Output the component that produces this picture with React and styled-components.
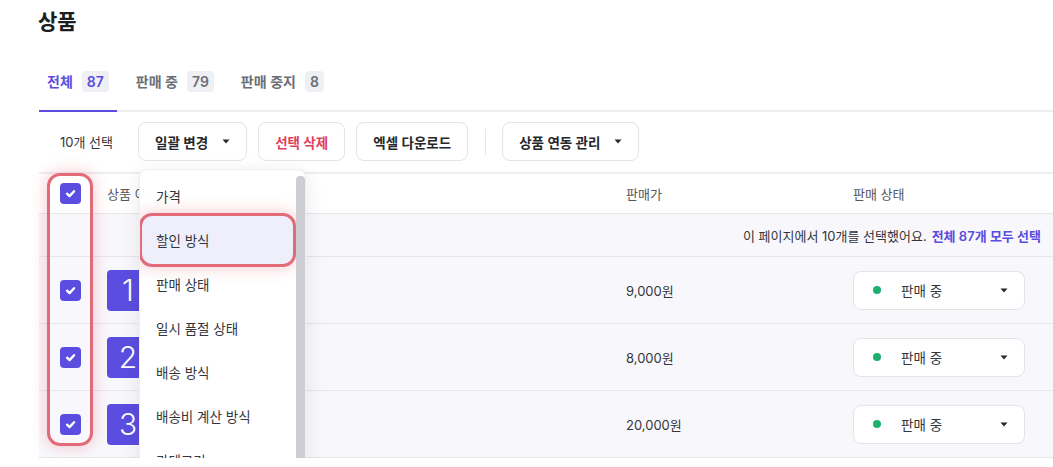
import React from 'react';
import styled, { createGlobalStyle } from 'styled-components';

const PURPLE = '#5b4de0';
const RING = '#e36a78';

const GlobalStyle = createGlobalStyle`
  html, body {
    margin: 0;
    background: #ffffff;
    overflow: hidden;
  }
  body {
    font-family: 'Inter', 'Noto Sans CJK KR', sans-serif;
    color: #222327;
  }
  * { box-sizing: border-box; }
`;

const Page = styled.div`
  padding: 8px 0 0 39px;
  height: 458px;
  overflow: hidden;
`;

const Title = styled.h1`
  margin: 0 0 16px -1px;
  font-size: 21px;
  line-height: 28px;
  font-weight: 700;
  color: #1c1d21;
`;

const Tabs = styled.div`
  display: flex;
  gap: 11px;
  height: 60px;
  border-bottom: 2px solid #eceef1;
`;

const Tab = styled.div`
  position: relative;
  display: flex;
  align-items: center;
  gap: 9px;
  padding: 0 8px;
  font-size: 14px;
  font-weight: 600;
  color: ${p => (p.$active ? PURPLE : '#6b6e76')};

  &::after {
    content: '';
    position: absolute;
    left: 0;
    right: 0;
    bottom: -2px;
    height: 2px;
    background: ${p => (p.$active ? PURPLE : 'transparent')};
  }
`;

const Badge = styled.span`
  padding: 2px 5px;
  border-radius: 4px;
  background: #eff0f4;
  font-size: 14px;
  font-weight: 600;
  color: ${p => (p.$active ? PURPLE : '#6b6e76')};
`;

const Toolbar = styled.div`
  display: flex;
  align-items: center;
  padding: 10px 0 0 21px;
`;

const SelectedCount = styled.span`
  font-size: 13px;
  color: #34363b;
  margin-right: 25px;
`;

const ButtonWrap = styled.div`
  position: relative;
  margin-right: ${p => p.$gap || 11}px;
`;

const Button = styled.div`
  display: flex;
  align-items: center;
  gap: 14px;
  height: 39px;
  padding: 0 16px;
  border: 1px solid #e3e4e8;
  border-radius: 8px;
  background: #fff;
  font-size: 13.5px;
  font-weight: 600;
  color: ${p => (p.$danger ? '#e0405a' : '#26272b')};
  white-space: nowrap;
`;

const Divider = styled.div`
  width: 1px;
  height: 26px;
  background: #e6e7eb;
  margin: 0 16px 0 5px;
`;

const Menu = styled.div`
  position: absolute;
  left: 1px;
  top: calc(100% + 8px);
  width: 167px;
  height: 330px;
  padding-top: 4px;
  background: #fff;
  border: 1px solid #eceef1;
  border-radius: 8px;
  box-shadow: 0 4px 18px rgba(30, 30, 50, 0.1);
  z-index: 10;
  overflow: hidden;
`;

const Scrollbar = styled.div`
  position: absolute;
  right: 0;
  top: 6px;
  bottom: 0;
  width: 9px;
  border-radius: 4px;
  background: #cdced4;
`;

const MenuItem = styled.div`
  position: relative;
  z-index: 1;
  display: flex;
  align-items: center;
  height: 44px;
  margin-left: 4px;
  width: 150px;
  padding-left: 12px;
  font-size: 13.5px;
  color: #34363b;
`;

const Ring = styled.div`
  position: absolute;
  left: ${p => p.$left}px;
  top: ${p => p.$top}px;
  width: ${p => p.$width}px;
  height: ${p => p.$height}px;
  border: 3px solid ${RING};
  border-radius: 13px;
  background: ${p => p.$fill || 'transparent'};
  box-shadow: 0 0 14px 2px rgba(227, 106, 120, 0.3);
  z-index: ${p => p.$z || 0};
  pointer-events: none;
`;

const Table = styled.div`
  position: relative;
  margin-top: 11px;
`;

const Row = styled.div`
  display: grid;
  grid-template-columns: 68px 519px 227px 1fr;
  align-items: center;
  height: ${p => p.$h}px;
  background: ${p => p.$bg || '#fff'};
  border-bottom: 1px solid #e6e7eb;
  border-top: ${p => (p.$head ? '2px solid #eceef1' : 'none')};
`;

const MessageRow = styled.div`
  display: flex;
  align-items: center;
  justify-content: flex-end;
  gap: 5px;
  height: 43px;
  padding-right: 12px;
  background: #f8f8fc;
  border-bottom: 1px solid #e6e7eb;
  font-size: 13px;
  color: #34363b;
`;

const SelectAll = styled.span`
  color: ${PURPLE};
  font-weight: 600;
`;

const Cell = styled.div`
  display: flex;
  align-items: center;
  padding-left: ${p => p.$pl || 0}px;
  font-size: 13px;
  color: ${p => (p.$head ? '#55575e' : '#34363b')};
`;

const Checkbox = styled.div`
  width: 21px;
  height: 21px;
  border-radius: 4px;
  background: ${PURPLE};
  display: flex;
  align-items: center;
  justify-content: center;
`;

const Thumb = styled.div`
  width: 42px;
  height: 41px;
  border-radius: 4px;
  background: ${PURPLE};
  color: #fff;
  font-size: 30px;
  font-weight: 300;
  display: flex;
  align-items: center;
  justify-content: center;
`;

const StatusSelect = styled.div`
  display: flex;
  align-items: center;
  width: 172px;
  height: 39px;
  padding: 0 16px 0 19px;
  border: 1px solid #e3e4e8;
  border-radius: 8px;
  background: #fff;
  font-size: 13.5px;
  color: #34363b;
`;

const Dot = styled.span`
  width: 8px;
  height: 8px;
  border-radius: 50%;
  background: #1bb06e;
  margin-right: 20px;
`;

const Spacer = styled.span`
  flex: 1;
`;

const Caret = () => (
  <svg width="8" height="5" viewBox="0 0 8 5">
    <path d="M0.5 0.5 L7.5 0.5 L4 4.5 Z" fill="#26272b" />
  </svg>
);

const Check = () => (
  <svg width="13" height="13" viewBox="0 0 12 12">
    <path d="M2.8 6.2 L5.1 8.4 L9.3 3.9" stroke="#fff" strokeWidth="2.2" fill="none" strokeLinecap="round" strokeLinejoin="round" />
  </svg>
);

const menuItems = ['가격', '할인 방식', '판매 상태', '일시 품절 상태', '배송 방식', '배송비 계산 방식', '카테고리'];

const products = [
  { no: 1, price: '9,000원' },
  { no: 2, price: '8,000원' },
  { no: 3, price: '20,000원' },
];

export default function App() {
  return (
    <>
      <GlobalStyle />
      <Page>
        <Title>상품</Title>

        <Tabs>
          <Tab $active>전체 <Badge $active>87</Badge></Tab>
          <Tab>판매 중 <Badge>79</Badge></Tab>
          <Tab>판매 중지 <Badge>8</Badge></Tab>
        </Tabs>

        <Toolbar>
          <SelectedCount>10개 선택</SelectedCount>
          <ButtonWrap>
            <Button>일괄 변경 <Caret /></Button>
            <Menu>
              <Ring $left={-1} $top={43} $width={157} $height={54} $fill="#efeffb" />
              {menuItems.map(item => (
                <MenuItem key={item}>{item}</MenuItem>
              ))}
              <Scrollbar />
            </Menu>
          </ButtonWrap>
          <ButtonWrap>
            <Button $danger>선택 삭제</Button>
          </ButtonWrap>
          <ButtonWrap $gap={12}>
            <Button>엑셀 다운로드</Button>
          </ButtonWrap>
          <Divider />
          <ButtonWrap>
            <Button>상품 연동 관리 <Caret /></Button>
          </ButtonWrap>
        </Toolbar>

        <Table>
          <Row $head $h={42}>
            <Cell $pl={21}><Checkbox><Check /></Checkbox></Cell>
            <Cell $head>상품 이름</Cell>
            <Cell $head>판매가</Cell>
            <Cell $head>판매 상태</Cell>
          </Row>
          <MessageRow>
            이 페이지에서 10개를 선택했어요.
            <SelectAll>전체 87개 모두 선택</SelectAll>
          </MessageRow>
          {products.map(p => (
            <Row key={p.no} $h={67} $bg="#f8f8fc">
              <Cell $pl={21}><Checkbox><Check /></Checkbox></Cell>
              <Cell><Thumb>{p.no}</Thumb></Cell>
              <Cell>{p.price}</Cell>
              <Cell>
                <StatusSelect>
                  <Dot />
                  판매 중
                  <Spacer />
                  <Caret />
                </StatusSelect>
              </Cell>
            </Row>
          ))}
          <Ring $left={8} $top={1} $width={46} $height={273} $z={5} />
        </Table>
      </Page>
    </>
  );
}
